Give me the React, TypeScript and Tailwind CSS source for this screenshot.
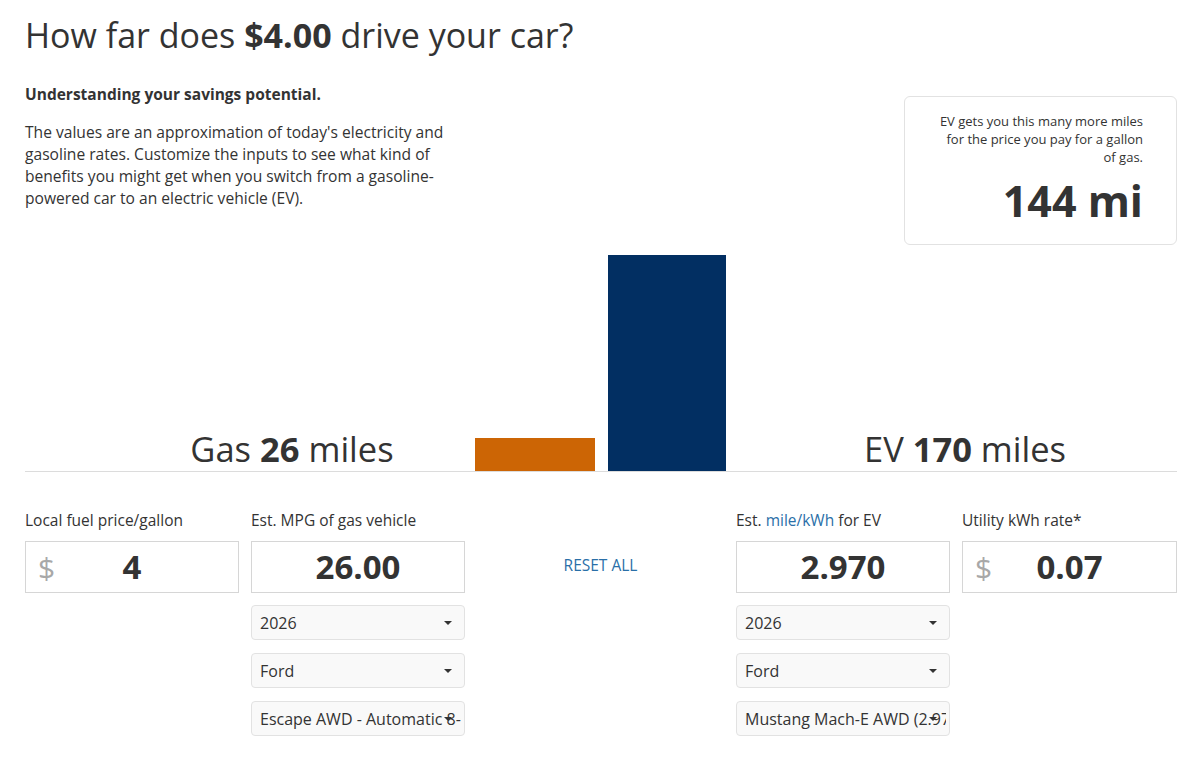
const font = { fontFamily: '"Open Sans", "Noto Sans", sans-serif' }

const Caret = () => (
  <svg width="8" height="4" viewBox="0 0 8 4" className="shrink-0">
    <path d="M0 0h8L4 4z" fill="#333" />
  </svg>
)

const Select = ({ value }: { value: string }) => (
  <div className="relative flex h-[35px] items-center overflow-hidden rounded-[4px] border border-[#e2e2e2] bg-[#f9f9f9] pl-2 pr-[3px] text-[16px] text-[#333]">
    <span className="overflow-hidden whitespace-nowrap">{value}</span>
    <span className="absolute right-[12px] top-1/2 -translate-y-1/2">
      <Caret />
    </span>
  </div>
)

const NumberBox = ({ value, dollar }: { value: string; dollar?: boolean }) => (
  <div className="relative flex h-[52px] items-center justify-center border border-[#d6d6d6] bg-white">
    {dollar && (
      <span className="absolute left-[12px] top-1/2 -translate-y-1/2 text-[30px] text-[#a8a8a8]">$</span>
    )}
    <span className="text-[33px] font-bold text-[#333]">{value}</span>
  </div>
)

const App = () => {
  return (
    <div className="min-h-[762px] bg-white pl-[25px] pr-[23px] pt-[12px] text-[#333]" style={font}>
      {/* Header */}
      <h1 className="text-[34px] leading-[46px] text-[#333]">
        How far does <span className="font-bold">$4.00</span> drive your car?
      </h1>

      <div className="flex justify-between">
        <div className="mt-[25px] w-[440px]">
          <p className="text-[15.5px] font-bold">Understanding your savings potential.</p>
          <p className="mt-[15px] text-[15.6px] leading-[22px]">
            The values are an approximation of today's electricity and gasoline rates. Customize the
            inputs to see what kind of benefits you might get when you switch from a gasoline-powered
            car to an electric vehicle (EV).
          </p>
        </div>

        <div className="mt-[38px] flex h-[149px] w-[273px] flex-col items-end rounded-[6px] border border-[#e2e2e2] pl-[32px] pr-[33px] pt-[15px] text-right">
          <p className="text-[13px] leading-[18px]">
            EV gets you this many more miles for the price you pay for a gallon of gas.
          </p>
          <p className="mt-[6px] text-[43px] font-bold leading-[58px]">144 mi</p>
        </div>
      </div>

      {/* Chart */}
      <div className="mt-[10px] flex h-[217px] items-end border-b border-[#dcdcdc]">
        <div className="flex w-[450px] justify-center pl-[84px] text-[34.5px] leading-[44px]">
          <span>
            Gas <span className="font-bold">26</span> miles
          </span>
        </div>
        <div className="flex items-end gap-[13px]">
          <div className="h-[33px] w-[120px] bg-[#cc6505]" />
          <div className="h-[216px] w-[118px] bg-[#022f62]" />
        </div>
        <div className="flex flex-1 justify-center pl-[27px] text-[34.5px] leading-[44px]">
          <span>
            EV <span className="font-bold">170</span> miles
          </span>
        </div>
      </div>

      {/* Inputs */}
      <div className="mt-[37px] grid grid-cols-[214px_214px_1fr_214px_215px] gap-x-[12px]">
        <div>
          <p className="mb-[10px] text-[15.5px] leading-[22px]">Local fuel price/gallon</p>
          <NumberBox value="4" dollar />
        </div>
        <div>
          <p className="mb-[10px] text-[15.5px] leading-[22px]">Est. MPG of gas vehicle</p>
          <NumberBox value="26.00" />
          <div className="mt-[12px] flex flex-col gap-[13px]">
            <Select value="2026" />
            <Select value="Ford" />
            <Select value="Escape AWD - Automatic 8-spd" />
          </div>
        </div>
        <div className="flex items-start justify-center pt-[45px]">
          <button className="text-[15.5px] leading-[22px] text-[#2a6fa8]">RESET ALL</button>
        </div>
        <div>
          <p className="mb-[10px] text-[15.5px] leading-[22px]">
            Est. <span className="text-[#2a6fa8]">mile/kWh</span> for EV
          </p>
          <NumberBox value="2.970" />
          <div className="mt-[12px] flex flex-col gap-[13px]">
            <Select value="2026" />
            <Select value="Ford" />
            <Select value="Mustang Mach-E AWD (2.97 mi/kWh)" />
          </div>
        </div>
        <div>
          <p className="mb-[10px] text-[15.5px] leading-[22px]">Utility kWh rate*</p>
          <NumberBox value="0.07" dollar />
        </div>
      </div>
    </div>
  )
}

export default App
